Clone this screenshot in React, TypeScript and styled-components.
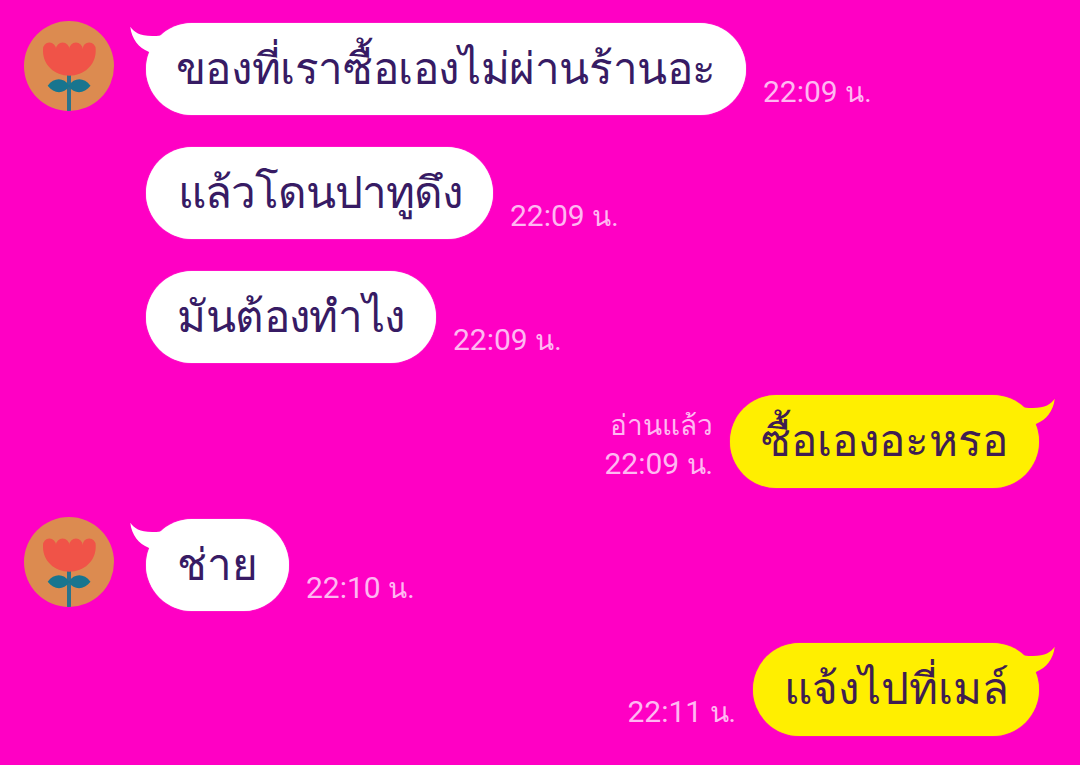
import styled, { createGlobalStyle } from "styled-components";

const GlobalStyle = createGlobalStyle`
  * {
    box-sizing: border-box;
  }
  body {
    margin: 0;
    background-color: #ff00c4;
  }
`;

const Chat = styled.main`
  display: flex;
  flex-direction: column;
  height: 765px;
  padding: 21px 41px 0 24px;
  overflow: hidden;
  background-color: #ff00c4;
  font-family: Roboto, "Noto Sans", sans-serif;
`;

const Row = styled.div<{ $mine?: boolean }>`
  display: flex;
  flex-direction: ${(props) => (props.$mine ? "row-reverse" : "row")};
  flex-shrink: 0;
  height: 124px;
`;

const AvatarSlot = styled.div`
  width: 90px;
  height: 90px;
  margin-right: 32px;
`;

const Bubble = styled.div<{ $mine?: boolean; $width: number }>`
  position: relative;
  display: flex;
  justify-content: center;
  width: ${(props) => props.$width}px;
  height: ${(props) => (props.$mine ? 93 : 92)}px;
  margin-top: 2px;
  border-radius: 47px;
  background-color: ${(props) => (props.$mine ? "#ffef00" : "#ffffff")};
  box-shadow: 0 0 1px
    ${(props) => (props.$mine ? "rgba(255, 239, 0, 0.7)" : "rgba(255, 255, 255, 0.8)")};
  color: ${(props) => (props.$mine ? "#3f1d52" : "#371b64")};
`;

const Text = styled.span<{ $spacing?: number }>`
  font-size: 44px;
  line-height: 92px;
  letter-spacing: ${(props) => props.$spacing ?? 0}px;
  white-space: nowrap;
`;

const Tail = styled.svg<{ $mine?: boolean }>`
  position: absolute;
  top: 3px;
  ${(props) => (props.$mine ? "right: -16px;" : "left: -16px;")}
  transform: ${(props) => (props.$mine ? "scaleX(-1)" : "none")};
`;

const Meta = styled.div<{ $mine?: boolean }>`
  display: flex;
  flex-direction: column;
  justify-content: flex-end;
  align-items: ${(props) => (props.$mine ? "flex-end" : "flex-start")};
  height: 90px;
  margin: 0 17px;
  font-size: 30px;
  line-height: 38px;
  color: #ffb8f2;
  white-space: nowrap;
`;

const Time = styled.span`
  height: 38px;
`;

const Small = styled.span`
  font-size: 28px;
`;

const Avatar = () => {
  return (
    <svg width="90" height="90" viewBox="0 0 90 90">
      <defs>
        <clipPath id="avatar">
          <circle cx="45" cy="45" r="45" />
        </clipPath>
      </defs>
      <g clipPath="url(#avatar)">
        <rect width="90" height="90" fill="#dc8b50" />
        <rect x="43" y="53" width="4" height="37" fill="#2b738c" />
        <path
          d="M45 64.5C40 56.5 30 56 23.7 64.8C30 73.3 40 73 45 65.5C50 73 60 73.3 66.5 64.8C60 56 50 56.5 45 64.5Z"
          fill="#18758f"
        />
        <path
          d="M19 30V28.3A6.5 6.6 0 0 1 32 28A6.65 6.5 0 0 1 45.3 28A6.65 6.5 0 0 1 58.6 28A6.5 6.6 0 0 1 71.7 28.3V30C71.7 44 60 54.7 45.3 54.7C30.7 54.7 19 44 19 30Z"
          fill="#f05348"
        />
      </g>
    </svg>
  );
};

interface IMessage {
  id: number;
  text: string;
  time: string;
  width: number;
  mine?: boolean;
  read?: boolean;
  avatar?: boolean;
  tail?: boolean;
  spacing?: number;
}

const messages: IMessage[] = [
  {
    id: 1,
    text: "ของที่เราซื้อเองไม่ผ่านร้านอะ",
    time: "22:09",
    width: 600,
    avatar: true,
    tail: true,
    spacing: -0.4,
  },
  {
    id: 2,
    text: "แล้วโดนปาทูดึง",
    time: "22:09",
    width: 347,
    spacing: -1,
  },
  { id: 3, text: "มันต้องทำไง", time: "22:09", width: 290, spacing: -0.6 },
  {
    id: 4,
    text: "ซื้อเองอะหรอ",
    time: "22:09",
    width: 309,
    mine: true,
    read: true,
    tail: true,
  },
  {
    id: 5,
    text: "ช่าย",
    time: "22:10",
    width: 143,
    avatar: true,
    tail: true,
  },
  {
    id: 6,
    text: "แจ้งไปที่เมล์",
    time: "22:11",
    width: 286,
    mine: true,
    tail: true,
  },
];

function App() {
  return (
    <>
      <GlobalStyle />
      <Chat>
        {messages.map((message) => (
          <Row key={message.id} $mine={message.mine}>
            {!message.mine && (
              <AvatarSlot>{message.avatar && <Avatar />}</AvatarSlot>
            )}
            <Bubble $mine={message.mine} $width={message.width}>
              {message.tail && (
                <Tail
                  $mine={message.mine}
                  width="40"
                  height="30"
                  viewBox="0 0 40 30"
                >
                  <path
                    d="M0.3 0.8C5 7.5 12 11.5 31 9.5L36 12L22 28L18.6 25.8C9 22 1.5 13 0.3 0.8Z"
                    fill={message.mine ? "#ffef00" : "#ffffff"}
                  />
                </Tail>
              )}
              <Text $spacing={message.spacing}>{message.text}</Text>
            </Bubble>
            <Meta $mine={message.mine}>
              {message.read && <Small>อ่านแล้ว</Small>}
              <Time>
                {message.time} <Small>น.</Small>
              </Time>
            </Meta>
          </Row>
        ))}
      </Chat>
    </>
  );
}
export default App;
